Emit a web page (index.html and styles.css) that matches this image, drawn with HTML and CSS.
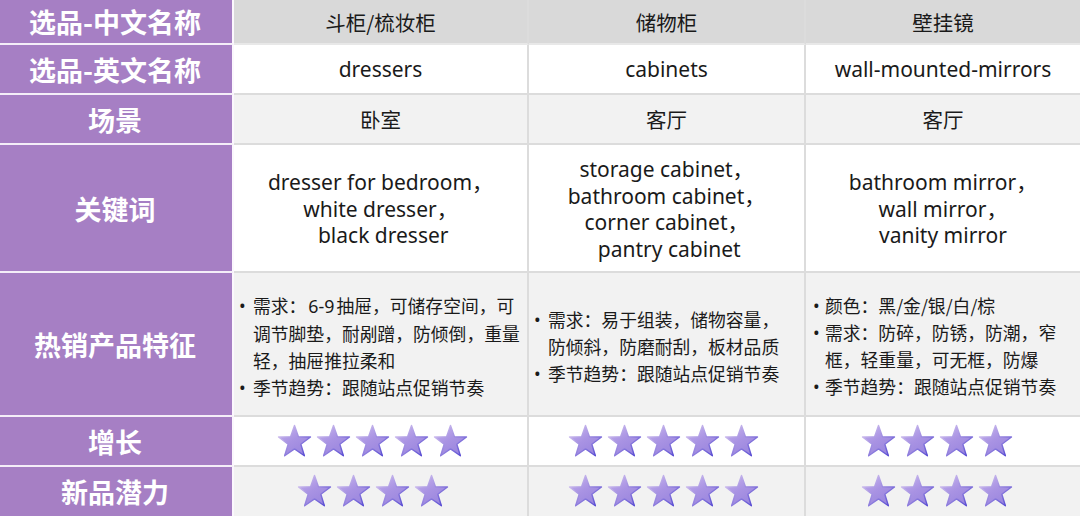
FILE: index.html
```html
<!DOCTYPE html>
<html lang="zh">
<head>
<meta charset="utf-8">
<link rel="stylesheet" href="styles.css">
</head>
<body>
<svg class="defs" width="0" height="0" aria-hidden="true">
  <defs>
    <linearGradient id="sf" x1="0" y1="0" x2="0.6" y2="1">
      <stop offset="0" stop-color="#c9b6ee"/>
      <stop offset="0.55" stop-color="#a993e3"/>
      <stop offset="1" stop-color="#9a86de"/>
    </linearGradient>
    <linearGradient id="ss" x1="0" y1="0" x2="1" y2="1">
      <stop offset="0" stop-color="#e6d6f4"/>
      <stop offset="0.5" stop-color="#9d8be0"/>
      <stop offset="1" stop-color="#4a3fd0"/>
    </linearGradient>
    <symbol id="star" viewBox="0 0 100 100">
      <path d="M50 4 L61.17 36.63 L95.65 37.17 L68.07 57.87 L78.21 90.83 L50 71 L21.79 90.83 L31.93 57.87 L4.35 37.17 L38.83 36.63 Z" fill="url(#sf)" stroke="url(#ss)" stroke-width="4" stroke-linejoin="round"/>
    </symbol>
  </defs>
</svg>
<div class="table">
  <div class="lab">选品-中文名称</div>
  <div class="c hd">斗柜/梳妆柜</div>
  <div class="c hd">储物柜</div>
  <div class="c hd last">壁挂镜</div>

  <div class="lab">选品-英文名称</div>
  <div class="c w en">dressers</div>
  <div class="c w en">cabinets</div>
  <div class="c w en last">wall-mounted-mirrors</div>

  <div class="lab">场景</div>
  <div class="c g">卧室</div>
  <div class="c g">客厅</div>
  <div class="c g last">客厅</div>

  <div class="lab">关键词</div>
  <div class="c w en kw"><p>dresser for bedroom，<br>white dresser，<br>&nbsp;black dresser</p></div>
  <div class="c w en kw"><p>storage cabinet，<br>bathroom cabinet，<br>corner cabinet，<br>&nbsp;pantry cabinet</p></div>
  <div class="c w en kw last"><p>bathroom mirror，<br>wall mirror，<br>vanity mirror</p></div>

  <div class="lab">热销产品特征</div>
  <div class="c g feat f2">
    <ul>
      <li><span class="b">•</span><span>需求：<span class="num">6-9</span>抽屉，可储存空间，可<br>调节脚垫，耐剐蹭，防倾倒，重量<br>轻，抽屉推拉柔和</span></li>
      <li><span class="b">•</span><span>季节趋势：跟随站点促销节奏</span></li>
    </ul>
  </div>
  <div class="c g feat f3">
    <ul>
      <li><span class="b">•</span><span>需求：易于组装，储物容量，<br>防倾斜，防磨耐刮，板材品质</span></li>
      <li><span class="b">•</span><span>季节趋势：跟随站点促销节奏</span></li>
    </ul>
  </div>
  <div class="c g feat f4 last">
    <ul>
      <li><span class="b">•</span><span>颜色：黑/金/银/白/棕</span></li>
      <li><span class="b">•</span><span>需求：防碎，防锈，防潮，窄<br>框，轻重量，可无框，防爆</span></li>
      <li><span class="b">•</span><span>季节趋势：跟随站点促销节奏</span></li>
    </ul>
  </div>

  <div class="lab">增长</div>
  <div class="c w stars s2">
    <svg class="st"><use href="#star"/></svg><svg class="st"><use href="#star"/></svg><svg class="st"><use href="#star"/></svg><svg class="st"><use href="#star"/></svg><svg class="st"><use href="#star"/></svg>
  </div>
  <div class="c w stars s3">
    <svg class="st"><use href="#star"/></svg><svg class="st"><use href="#star"/></svg><svg class="st"><use href="#star"/></svg><svg class="st"><use href="#star"/></svg><svg class="st"><use href="#star"/></svg>
  </div>
  <div class="c w stars s4 last">
    <svg class="st"><use href="#star"/></svg><svg class="st"><use href="#star"/></svg><svg class="st"><use href="#star"/></svg><svg class="st"><use href="#star"/></svg>
  </div>

  <div class="lab lastrow">新品潜力</div>
  <div class="c g stars s2 lastrow">
    <svg class="st"><use href="#star"/></svg><svg class="st"><use href="#star"/></svg><svg class="st"><use href="#star"/></svg><svg class="st"><use href="#star"/></svg>
  </div>
  <div class="c g stars s3 lastrow">
    <svg class="st"><use href="#star"/></svg><svg class="st"><use href="#star"/></svg><svg class="st"><use href="#star"/></svg><svg class="st"><use href="#star"/></svg><svg class="st"><use href="#star"/></svg>
  </div>
  <div class="c g stars s4 last lastrow">
    <svg class="st"><use href="#star"/></svg><svg class="st"><use href="#star"/></svg><svg class="st"><use href="#star"/></svg><svg class="st"><use href="#star"/></svg>
  </div>
</div>
</body>
</html>
```

FILE: styles.css
```css
html, body {
  margin: 0;
  padding: 0;
  background: #ffffff;
  overflow: hidden;
}
.defs {
  position: absolute;
  width: 0;
  height: 0;
}
.table {
  width: 1080px;
  height: 516px;
  display: grid;
  grid-template-columns: 234px 295px 277px 274px;
  grid-template-rows: 45px 50px 50px 128px 144px 50px 49px;
  font-family: "Noto Sans", "Noto Sans CJK SC", sans-serif;
  color: #1a1a1a;
}
.lab {
  box-sizing: border-box;
  background: #a67fc4;
  color: #ffffff;
  font-family: "Noto Sans CJK SC", sans-serif;
  font-weight: 700;
  font-size: 27px;
  display: flex;
  align-items: center;
  justify-content: center;
  padding-right: 2px;
  border-right: 2px solid #fbf7fd;
  border-bottom: 2px solid #f4eef8;
}
.c {
  box-sizing: border-box;
  display: flex;
  align-items: center;
  justify-content: center;
  border-right: 2px solid #dcdcdc;
  border-bottom: 2px solid #dcdcdc;
  font-family: "Noto Sans CJK SC", sans-serif;
  font-size: 20.5px;
}
.last { border-right: none; }
.lastrow { border-bottom: none; }
.hd { background: #d9d9d9; border-bottom-color: #e8e8e8; }
.w { background: #ffffff; }
.g { background: #f2f2f2; }
.en {
  font-family: "Noto Sans", "Noto Sans CJK SC", sans-serif;
  font-size: 21px;
}
.kw p {
  margin: 0;
  text-align: center;
  line-height: 26.5px;
  padding-top: 2px;
}
.feat {
  justify-content: flex-start;
  font-size: 17.8px;
  line-height: 27px;
  white-space: nowrap;
  padding-top: 4px;
}
.feat ul {
  list-style: none;
  margin: 0;
  padding: 0;
}
.feat li {
  display: flex;
}
.feat .b {
  flex: 0 0 14px;
  font-family: "Noto Sans", sans-serif;
}
.feat .num {
  font-family: "Noto Sans", sans-serif;
  padding: 0 2px;
}
.f2 { padding-left: 5px; }
.f3 { padding-left: 5px; }
.f4 { padding-left: 7px; }
.f4 .b { flex-basis: 12px; }
.stars {
  gap: 4px;
}
.s2 { padding-right: 16px; }
.s3 { padding-right: 6px; }
.s4 { padding-right: 12px; }
.st {
  width: 35px;
  height: 35px;
}
```
